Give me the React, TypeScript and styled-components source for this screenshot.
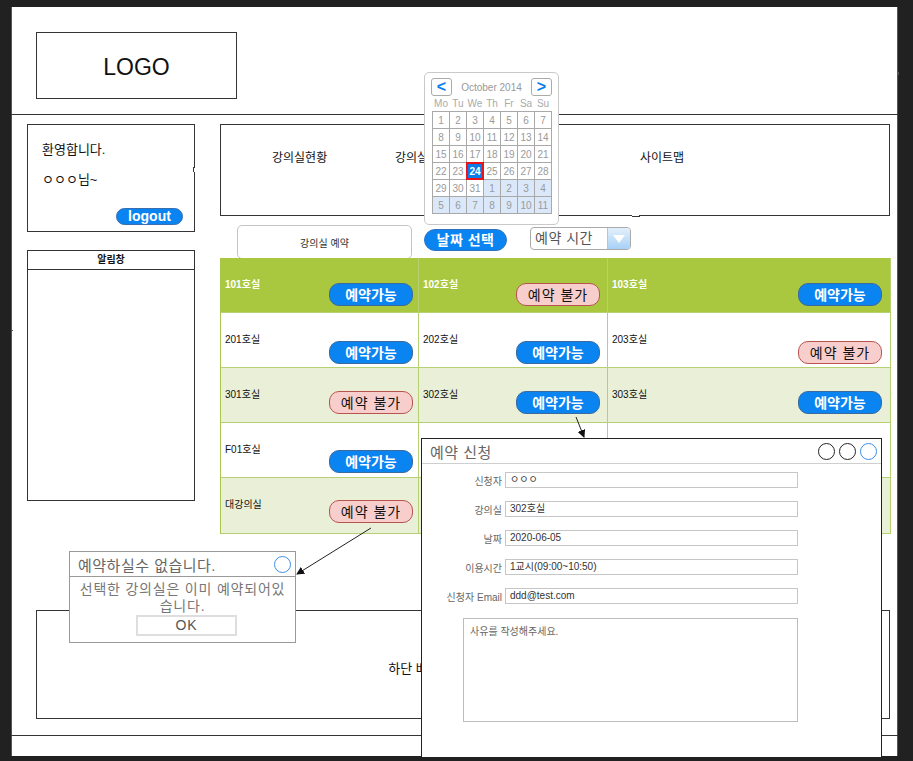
import styled, { createGlobalStyle, css } from 'styled-components';

const FONT = `'Liberation Sans', 'Noto Sans CJK KR', sans-serif`;

const GlobalStyle = createGlobalStyle`
  html, body {
    margin: 0;
    padding: 0;
    background: #212121;
  }
  body {
    font-family: ${FONT};
    color: #111;
  }
  * {
    box-sizing: border-box;
  }
`;

/* hand-drawn edge, like the draw.io sketch style */
const sketchEdge = (widths: string, color = '#363636') => css`
  position: relative;
  &::before {
    content: '';
    position: absolute;
    inset: 0;
    border-style: solid;
    border-color: ${color};
    border-width: ${widths};
    filter: url(#rough);
    pointer-events: none;
  }
`;

const Defs = styled.svg`
  position: absolute;
  width: 0;
  height: 0;
`;

const Screen = styled.div`
  width: 913px;
  height: 761px;
  overflow: hidden;
  padding: 7px 0 0 11px;
`;

const Canvas = styled.div`
  ${sketchEdge('0 1px 0 1px', '#555')}
  width: 887px;
  height: 749px;
  background: #fff;
  display: flex;
  flex-direction: column;
`;

const Header = styled.header`
  ${sketchEdge('0 0 1px 0')}
  height: 108px;
  padding: 25px 0 0 25px;
  flex-shrink: 0;
`;

const Logo = styled.div`
  ${sketchEdge('1px')}
  width: 201px;
  height: 67px;
  display: flex;
  align-items: center;
  justify-content: center;
  padding-top: 3px;
  font-size: 23px;
  color: #111;
`;

const Middle = styled.div`
  display: flex;
  gap: 25px;
  padding: 9px 0 0 16px;
`;

const Sidebar = styled.aside`
  width: 168px;
  display: flex;
  flex-direction: column;
  gap: 18px;
`;

const Welcome = styled.div`
  ${sketchEdge('1px')}
  height: 108px;
  padding: 18px 12px 7px 15px;
  display: flex;
  flex-direction: column;
  font-size: 13px;
  line-height: 16px;

  p {
    margin: 0 0 14px;
  }
`;

const Logout = styled.button`
  margin-top: auto;
  align-self: flex-end;
  width: 67px;
  height: 17px;
  padding: 0;
  border-radius: 9px;
  border: 1px solid #3a6fae;
  background: #0a84f0;
  color: #fff;
  font-family: ${FONT};
  font-size: 14px;
  font-weight: 700;
  line-height: 15px;
`;

const Notice = styled.div`
  height: 251px;
  border: 1px solid #333;
`;

const NoticeTitle = styled.div`
  height: 19px;
  border-bottom: 1px solid #333;
  text-align: center;
  font-size: 10px;
  font-weight: 700;
  line-height: 18px;
`;

const Main = styled.main`
  width: 670px;
  display: flex;
  flex-direction: column;
`;

const Nav = styled.nav`
  ${sketchEdge('1px')}
  height: 92px;
  display: grid;
  grid-template-columns: 123px 120px 125px auto;
  align-content: start;
  padding: 27px 0 0 52px;
  font-size: 12px;
  line-height: 14px;
`;

const Toolbar = styled.div`
  height: 42px;
  display: flex;
  align-items: flex-start;
  padding: 9px 0 0 17px;
`;

const ReserveTab = styled.div`
  width: 175px;
  height: 34px;
  border: 1px solid #c4c4c4;
  border-radius: 5px;
  display: flex;
  align-items: center;
  justify-content: center;
  font-size: 10px;
  color: #333;
`;

const DateButton = styled.button`
  margin: 4px 0 0 12px;
  width: 83px;
  height: 22px;
  padding: 0;
  border: 1px solid #2f73c0;
  border-radius: 11px;
  background: #0a84f0;
  color: #fff;
  font-family: ${FONT};
  font-size: 14px;
  font-weight: 700;
  line-height: 18px;
  letter-spacing: 0.5px;
`;

const Combo = styled.div`
  margin: 2px 0 0 23px;
  width: 101px;
  height: 23px;
  border: 1px solid #aaa;
  border-radius: 4px;
  display: flex;
  overflow: hidden;
`;

const ComboText = styled.span`
  flex: 1;
  padding-left: 4px;
  font-size: 14px;
  line-height: 21px;
  color: #555;
  letter-spacing: 0.5px;
`;

const ComboArrow = styled.span`
  width: 23px;
  border-left: 1px solid #c2c2c2;
  background: linear-gradient(180deg, #e3f0fc 0%, #a8d0f6 100%);
  display: flex;
  align-items: center;
  justify-content: center;
`;

const Table = styled.div`
  display: grid;
  grid-template-columns: 198px 189px 283px;
  grid-template-rows: 55px 55px 55px 55px 56px;
  border-left: 1px solid #a9c74d;
`;

const Cell = styled.div<{ $bg: string; $pr: number; $pb: number }>`
  background: ${(p) => p.$bg};
  border-right: 1px solid #b6d172;
  border-bottom: 1px solid #b6d172;
  display: flex;
  justify-content: space-between;
  padding: 20px ${(p) => p.$pr}px ${(p) => p.$pb}px 4px;
`;

const RoomLabel = styled.span<{ $head: boolean }>`
  align-self: flex-start;
  font-size: 10px;
  line-height: 14px;
  color: ${(p) => (p.$head ? '#fff' : '#111')};
  font-weight: ${(p) => (p.$head ? 700 : 400)};
`;

const StatusButton = styled.span<{ $ok: boolean }>`
  align-self: flex-end;
  width: 84px;
  height: 23px;
  border-radius: 10px;
  display: flex;
  align-items: center;
  justify-content: center;
  font-size: 14px;
  line-height: 16px;
  ${(p) =>
    p.$ok
      ? `
    background: #0a84f0;
    border: 1px solid #3d6a9c;
    color: #fff;
    font-weight: 700;
  `
      : `
    background: #f8cecc;
    border: 1px solid #b85450;
    color: #111;
    letter-spacing: 1px;
  `}
`;

const Footer = styled.footer`
  ${sketchEdge('1px')}
  margin: 76px 0 0 25px;
  width: 854px;
  height: 109px;
  flex-shrink: 0;
  display: flex;
  align-items: center;
  justify-content: center;
  font-size: 13px;
  padding-top: 5px;
`;

const BottomRule = styled.div`
  ${sketchEdge('1px 0 0 0')}
  margin-top: 16px;
  flex: 1;
`;

/* date picker popup */
const Calendar = styled.div`
  position: absolute;
  left: 413px;
  top: 65px;
  width: 135px;
  height: 153px;
  z-index: 5;
  background: #fff;
  border: 1px solid #c9c9c9;
  border-radius: 5px;
  padding: 5px 6px 0 6px;
`;

const CalHead = styled.div`
  display: flex;
  align-items: center;
  justify-content: space-between;
  height: 18px;
`;

const CalNav = styled.span`
  width: 21px;
  height: 18px;
  border: 1px solid #aaa;
  border-radius: 3px;
  display: flex;
  align-items: center;
  justify-content: center;
  color: #0a7de8;
  font-size: 16px;
  font-weight: 700;
  line-height: 1;
`;

const CalTitle = styled.span`
  font-size: 10px;
  color: #999;
`;

const WeekRow = styled.div`
  display: grid;
  grid-template-columns: repeat(7, 16px);
  column-gap: 1px;
  padding: 0 0 0 2px;
  height: 15px;
  align-items: center;
  font-size: 10px;
  color: #aaa;
  text-align: center;
`;

const DayGrid = styled.div`
  margin-left: 1px;
  display: grid;
  grid-template-columns: repeat(7, 16px);
  grid-auto-rows: 16px;
  gap: 1px;
  width: 120px;
  border: 1px solid #a9a9a9;
  background: #a9a9a9;
`;

const Day = styled.span<{ $next?: boolean; $picked?: boolean }>`
  display: flex;
  align-items: center;
  justify-content: center;
  font-size: 10px;
  color: #9a9a9a;
  background: ${(p) => (p.$next ? '#dae8fa' : '#fff')};
  ${(p) =>
    p.$picked &&
    `
    background: #0a7de8;
    color: #fff;
    font-weight: 700;
    outline: 2px solid #e8141b;
    outline-offset: -1px;
    position: relative;
    z-index: 1;
  `}
`;

/* popup dialogs */
const Dialog = styled.div<{ $left: number; $top: number; $w: number; $h: number; $line: string }>`
  position: absolute;
  left: ${(p) => p.$left}px;
  top: ${(p) => p.$top}px;
  width: ${(p) => p.$w}px;
  height: ${(p) => p.$h}px;
  z-index: 6;
  background: #fff;
  border: 1px solid ${(p) => p.$line};
  display: flex;
  flex-direction: column;
`;

const DialogBar = styled.div<{ $line: string }>`
  height: 25px;
  flex-shrink: 0;
  border-bottom: 1px solid ${(p) => p.$line};
  display: flex;
  align-items: center;
  padding: 0 4px 0 8px;
  gap: 4px;
  font-size: 15px;
  color: #666;
`;

const DialogTitle = styled.span`
  flex: 1;
  letter-spacing: 0.5px;
`;

const Dot = styled.span<{ $blue?: boolean }>`
  width: 17px;
  height: 17px;
  border-radius: 50%;
  border: 1px solid ${(p) => (p.$blue ? '#3b8ee8' : '#222')};
`;

const AlertBody = styled.div`
  padding: 4px 6px 0;
  text-align: center;
  font-size: 14px;
  line-height: 17px;
  color: #777;
  letter-spacing: 0.8px;
  display: flex;
  flex-direction: column;
  align-items: center;
`;

const OkButton = styled.span`
  width: 101px;
  height: 21px;
  border: 2px solid #dedede;
  font-size: 14px;
  line-height: 17px;
  color: #555;
  margin-left: 8px;
`;

const Form = styled.div`
  display: grid;
  grid-template-columns: 80px 293px;
  column-gap: 3px;
  row-gap: 13px;
  padding-top: 8px;
  align-items: center;
`;

const FieldLabel = styled.span`
  text-align: right;
  font-size: 10px;
  color: #666;
`;

const Field = styled.span`
  height: 16px;
  border: 1px solid #c6c6c6;
  padding-left: 4px;
  font-size: 10px;
  line-height: 14px;
  color: #333;
`;

const Reason = styled.div`
  margin: 14px 0 0 41px;
  width: 335px;
  height: 104px;
  border: 1px solid #bdbdbd;
  padding: 4px 6px;
  font-size: 10px;
  color: #666;
`;

const Wires = styled.svg`
  position: absolute;
  left: 0;
  top: 0;
  width: 887px;
  height: 749px;
  z-index: 10;
  pointer-events: none;
`;

const rooms: Array<[string, boolean] | null> = [
  ['101호실', true], ['102호실', false], ['103호실', true],
  ['201호실', true], ['202호실', true], ['203호실', false],
  ['301호실', false], ['302호실', true], ['303호실', true],
  ['F01호실', true], null, null,
  ['대강의실', false], null, null,
];

const rowBg = ['#a9c840', '#ffffff', '#e9f0d7', '#ffffff', '#e9f0d7'];
const btnBottom = [6, 3, 8, 4, 10];
const colRight = [5, 7, 8];

const days: number[] = [
  ...Array.from({ length: 31 }, (_, i) => i + 1),
  ...Array.from({ length: 11 }, (_, i) => i + 1),
];

const fields = [
  ['신청자', 'ㅇㅇㅇ'],
  ['강의실', '302호실'],
  ['날짜', '2020-06-05'],
  ['이용시간', '1교시(09:00~10:50)'],
  ['신청자 Email', 'ddd@test.com'],
];

export default function App() {
  return (
    <>
      <GlobalStyle />
      <Defs>
        <filter id="rough" x="-5%" y="-5%" width="110%" height="110%">
          <feTurbulence type="fractalNoise" baseFrequency="0.035" numOctaves="2" seed="4" />
          <feDisplacementMap in="SourceGraphic" scale="1.6" />
        </filter>
      </Defs>
      <Screen>
        <Canvas>
          <Header>
            <Logo>LOGO</Logo>
          </Header>

          <Middle>
            <Sidebar>
              <Welcome>
                <p>환영합니다.</p>
                <p>ㅇㅇㅇ님~</p>
                <Logout>logout</Logout>
              </Welcome>
              <Notice>
                <NoticeTitle>알림창</NoticeTitle>
              </Notice>
            </Sidebar>

            <Main>
              <Nav>
                <span>강의실현황</span>
                <span>강의실예약</span>
                <span>예약확인</span>
                <span>사이트맵</span>
              </Nav>

              <Toolbar>
                <ReserveTab>강의실 예약</ReserveTab>
                <DateButton>날짜 선택</DateButton>
                <Combo>
                  <ComboText>예약 시간</ComboText>
                  <ComboArrow>
                    <svg width="12" height="8" viewBox="0 0 12 8">
                      <polygon points="0,0 12,0 6,8" fill="#fff" />
                    </svg>
                  </ComboArrow>
                </Combo>
              </Toolbar>

              <Table>
                {rooms.map((room, i) => {
                  const row = Math.floor(i / 3);
                  const col = i % 3;
                  return (
                    <Cell key={i} $bg={rowBg[row]} $pr={colRight[col]} $pb={btnBottom[row]}>
                      {room && (
                        <>
                          <RoomLabel $head={row === 0}>{room[0]}</RoomLabel>
                          <StatusButton $ok={room[1]}>{room[1] ? '예약가능' : '예약 불가'}</StatusButton>
                        </>
                      )}
                    </Cell>
                  );
                })}
              </Table>
            </Main>
          </Middle>

          <Footer>하단 배너 및 회사 정보 영역</Footer>
          <BottomRule />

          <Calendar>
            <CalHead>
              <CalNav>&lt;</CalNav>
              <CalTitle>October 2014</CalTitle>
              <CalNav>&gt;</CalNav>
            </CalHead>
            <WeekRow>
              {['Mo', 'Tu', 'We', 'Th', 'Fr', 'Sa', 'Su'].map((d) => (
                <span key={d}>{d}</span>
              ))}
            </WeekRow>
            <DayGrid>
              {days.map((d, i) => (
                <Day key={i} $next={i >= 31} $picked={i === 23}>
                  {d}
                </Day>
              ))}
            </DayGrid>
          </Calendar>

          <Dialog $left={58} $top={544} $w={227} $h={92} $line="#9a9a9a">
            <DialogBar $line="#9a9a9a">
              <DialogTitle>예약하실수 없습니다.</DialogTitle>
              <Dot $blue />
            </DialogBar>
            <AlertBody>
              선택한 강의실은 이미 예약되어있습니다.
              <OkButton>OK</OkButton>
            </AlertBody>
          </Dialog>

          <Dialog $left={410} $top={431} $w={461} $h={320} $line="#222">
            <DialogBar $line="#cfcfcf">
              <DialogTitle>예약 신청</DialogTitle>
              <Dot />
              <Dot />
              <Dot $blue />
            </DialogBar>
            <Form>
              {fields.map(([label, value]) => (
                <>
                  <FieldLabel key={label}>{label}</FieldLabel>
                  <Field key={label + 'v'}>{value}</Field>
                </>
              ))}
            </Form>
            <Reason>사유를 작성해주세요.</Reason>
          </Dialog>

          <Wires viewBox="0 0 887 749">
            <defs>
              <marker id="head" markerWidth="8" markerHeight="8" refX="7" refY="4" orient="auto" markerUnits="userSpaceOnUse">
                <path d="M0,0 L8,4 L0,8 Z" fill="#111" />
              </marker>
            </defs>
            <line x1="360" y1="521" x2="286" y2="567" stroke="#222" strokeWidth="1" markerEnd="url(#head)" />
            <line x1="565" y1="410" x2="573" y2="430" stroke="#222" strokeWidth="1" markerEnd="url(#head)" />
          </Wires>
        </Canvas>
      </Screen>
    </>
  );
}
